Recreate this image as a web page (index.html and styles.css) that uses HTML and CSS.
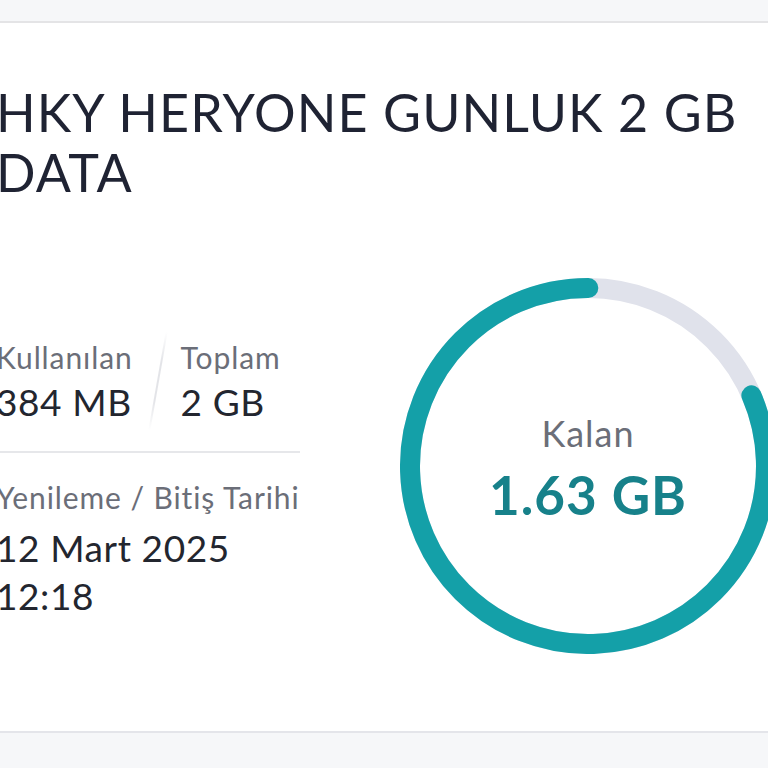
FILE: index.html
```html
<!DOCTYPE html>
<html lang="tr">
<head>
    <meta charset="UTF-8">
    <meta name="viewport" content="width=device-width, initial-scale=1.0">
    <title>Paket Detayı</title>
    <link rel="stylesheet" href="styles.css">
</head>
<body>

    <div class="card">
        <h1 class="package-title">HKY HERYONE GUNLUK 2 GB DATA</h1>

        <div class="package-body">
            <div class="usage-info">
                <div class="usage-row">
                    <div class="usage-item">
                        <span class="label">Kullanılan</span>
                        <span class="value">384 MB</span>
                    </div>
                    <div class="slash"></div>
                    <div class="usage-item">
                        <span class="label">Toplam</span>
                        <span class="value">2 GB</span>
                    </div>
                </div>
                <div class="renew">
                    <span class="label">Yenileme / Bitiş Tarihi</span>
                    <span class="value">12 Mart 2025<br>12:18</span>
                </div>
            </div>

            <div class="donut">
                <svg width="376" height="376" viewBox="0 0 376 376">
                    <circle class="track" cx="188" cy="188" r="178"></circle>
                    <circle class="progress" cx="188" cy="188" r="178"
                        stroke-dasharray="911.5 1118.4"
                        transform="rotate(-23.4 188 188)"></circle>
                </svg>
                <div class="donut-text">
                    <span class="donut-label">Kalan</span>
                    <span class="donut-value">1.63 GB</span>
                </div>
            </div>
        </div>
    </div>

</body>
</html>
```

FILE: styles.css
```css
body {
    font-family: Lato, "Open Sans", sans-serif;
    background-color: #f6f7f9;
    margin: 0;
    overflow: hidden;
    height: 768px;
}
.card {
    margin: 21px 0 0 -4px;
    height: 712px;
    background: #fff;
    border-top: 2px solid #e4e4e6;
    border-bottom: 2px solid #e4e5ea;
    box-sizing: border-box;
}
.package-title {
    margin: 0;
    padding-top: 59px;
    font-size: 52px;
    font-weight: 400;
    letter-spacing: 1.1px;
    line-height: 60px;
    color: #1f2333;
    width: 770px;
}
.package-body {
    display: grid;
    grid-template-columns: 304px 376px;
    column-gap: 100px;
    margin-top: 76px;
}
.usage-info {
    padding-top: 54px;
}
.usage-row {
    display: flex;
    align-items: center;
    padding-bottom: 21px;
    border-bottom: 2px solid #e6e7ea;
}
.usage-item {
    display: flex;
    flex-direction: column;
}
.slash {
    width: 2px;
    height: 98px;
    margin: 0 22px 0 24px;
    background: linear-gradient(#fff, #e3e4e8 30%, #e3e4e8 70%, #fff);
    transform: skewX(-10deg);
}
.label {
    font-size: 30px;
    letter-spacing: 0.9px;
    color: #6b6e78;
    line-height: 42px;
}
.value {
    font-size: 37px;
    letter-spacing: 0.6px;
    color: #23262f;
    line-height: 48px;
}
.renew {
    display: flex;
    flex-direction: column;
    padding-top: 23px;
}
.renew .value {
    margin-top: 6px;
}
.donut {
    position: relative;
    width: 376px;
    height: 376px;
}
.donut svg {
    display: block;
}
.track {
    fill: none;
    stroke: #e0e2eb;
    stroke-width: 20;
}
.progress {
    fill: none;
    stroke: #14a0a8;
    stroke-width: 20;
    stroke-linecap: round;
}
.donut-text {
    position: absolute;
    inset: 0;
    display: flex;
    flex-direction: column;
    align-items: center;
    padding-top: 133px;
}
.donut-label {
    font-size: 36px;
    letter-spacing: 1px;
    color: #6b6e78;
    line-height: 44px;
}
.donut-value {
    margin-top: 8px;
    font-size: 53px;
    font-weight: 700;
    letter-spacing: 1px;
    color: #17818a;
    line-height: 64px;
}
```
